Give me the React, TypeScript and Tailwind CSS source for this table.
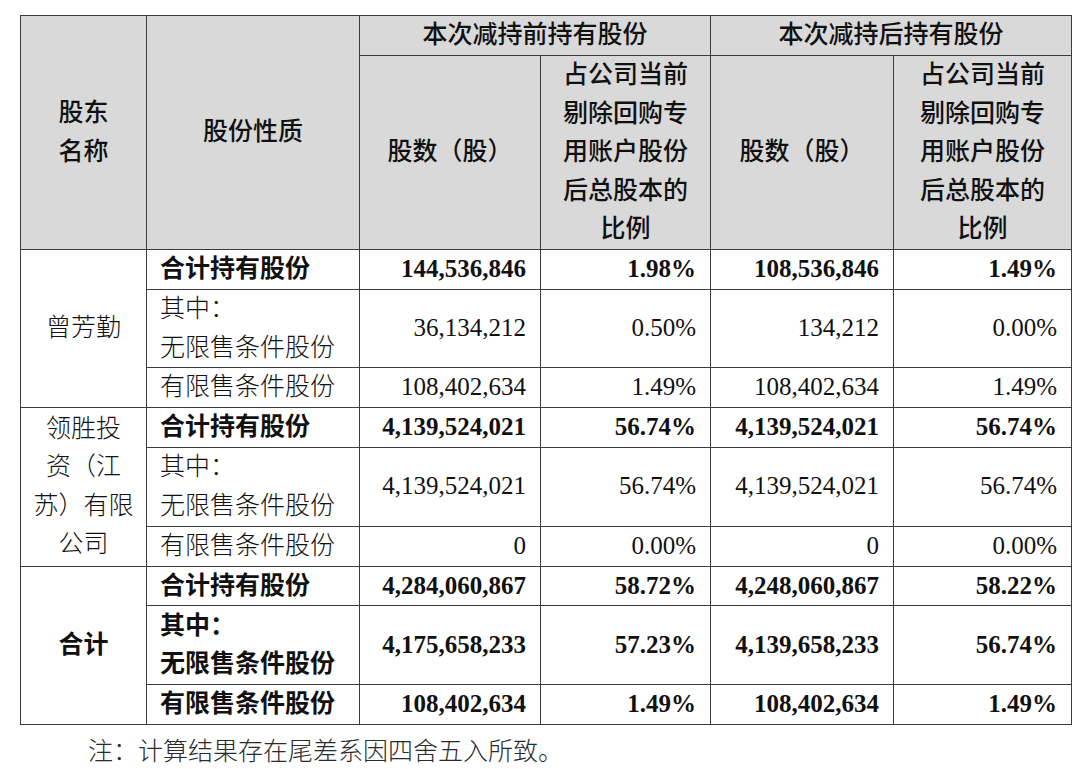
import React from "react";

const font = "font-['Liberation_Serif','Noto_Sans_CJK_SC',serif]";
const bd = "border-[1.5px] border-[#3c3c3c]";

type Row = {
  label: React.ReactNode;
  v: string[];
  bold?: boolean;
  h: string;
};

function DataRow({ r, first }: { r: Row; first?: React.ReactNode }) {
  const w = r.bold ? "font-bold" : "font-light";
  return (
    <tr className={r.h}>
      {first}
      <td className={`${bd} px-[13px] py-0 text-left align-middle ${w}`}>{r.label}</td>
      {r.v.map((x, i) => (
        <td key={i} className={`${bd} pl-2 pr-[14px] py-0 text-right align-middle ${w}`}>
          {x}
        </td>
      ))}
    </tr>
  );
}

export default function App() {
  const two = (
    <>
      其中：
      <br />
      无限售条件股份
    </>
  );
  const g1: Row[] = [
    { label: "合计持有股份", v: ["144,536,846", "1.98%", "108,536,846", "1.49%"], bold: true, h: "h-[40px]" },
    { label: two, v: ["36,134,212", "0.50%", "134,212", "0.00%"], h: "h-[78px]" },
    { label: "有限售条件股份", v: ["108,402,634", "1.49%", "108,402,634", "1.49%"], h: "h-[40px]" },
  ];
  const g2: Row[] = [
    { label: "合计持有股份", v: ["4,139,524,021", "56.74%", "4,139,524,021", "56.74%"], bold: true, h: "h-[39px]" },
    { label: two, v: ["4,139,524,021", "56.74%", "4,139,524,021", "56.74%"], h: "h-[79px]" },
    { label: "有限售条件股份", v: ["0", "0.00%", "0", "0.00%"], h: "h-[40px]" },
  ];
  const g3: Row[] = [
    { label: "合计持有股份", v: ["4,284,060,867", "58.72%", "4,248,060,867", "58.22%"], bold: true, h: "h-[39px]" },
    { label: two, v: ["4,175,658,233", "57.23%", "4,139,658,233", "56.74%"], bold: true, h: "h-[79px]" },
    { label: "有限售条件股份", v: ["108,402,634", "1.49%", "108,402,634", "1.49%"], bold: true, h: "h-[38px]" },
  ];

  const nameCell = (content: React.ReactNode, bold?: boolean) => (
    <td rowSpan={3} className={`${bd} px-1 py-0 text-center align-middle ${bold ? "font-bold" : "font-light"}`}>
      {content}
    </td>
  );

  const hd = `${bd} bg-[#d9d9d9] text-center align-middle font-medium px-1 py-0`;

  return (
    <div className={`min-h-screen w-[1080px] bg-white pt-[15px] pl-[20px] ${font} text-[25px] leading-[38.5px] text-[#111]`}>
      <table className="w-[1051px] table-fixed border-collapse">
        <colgroup>
          <col className="w-[126px]" />
          <col className="w-[213px]" />
          <col className="w-[181px]" />
          <col className="w-[170px]" />
          <col className="w-[183px]" />
          <col className="w-[178px]" />
        </colgroup>
        <thead>
          <tr className="h-[40px]">
            <th rowSpan={2} className={hd}>
              股东
              <br />
              名称
            </th>
            <th rowSpan={2} className={hd}>
              股份性质
            </th>
            <th colSpan={2} className={hd}>
              本次减持前持有股份
            </th>
            <th colSpan={2} className={hd}>
              本次减持后持有股份
            </th>
          </tr>
          <tr className="h-[194px]">
            <th className={hd}>股数（股）</th>
            <th className={hd}>
              占公司当前
              <br />
              剔除回购专
              <br />
              用账户股份
              <br />
              后总股本的
              <br />
              比例
            </th>
            <th className={hd}>股数（股）</th>
            <th className={hd}>
              占公司当前
              <br />
              剔除回购专
              <br />
              用账户股份
              <br />
              后总股本的
              <br />
              比例
            </th>
          </tr>
        </thead>
        <tbody>
          {g1.map((r, i) => (
            <DataRow key={"a" + i} r={r} first={i === 0 ? nameCell("曾芳勤") : undefined} />
          ))}
          {g2.map((r, i) => (
            <DataRow
              key={"b" + i}
              r={r}
              first={
                i === 0
                  ? nameCell(
                      <>
                        领胜投
                        <br />
                        资（江
                        <br />
                        苏）有限
                        <br />
                        公司
                      </>
                    )
                  : undefined
              }
            />
          ))}
          {g3.map((r, i) => (
            <DataRow key={"c" + i} r={r} first={i === 0 ? nameCell("合计", true) : undefined} />
          ))}
        </tbody>
      </table>
      <p className="mt-[8px] pl-[68px] font-light text-[#2a2a2a]">注：计算结果存在尾差系因四舍五入所致。</p>
    </div>
  );
}
